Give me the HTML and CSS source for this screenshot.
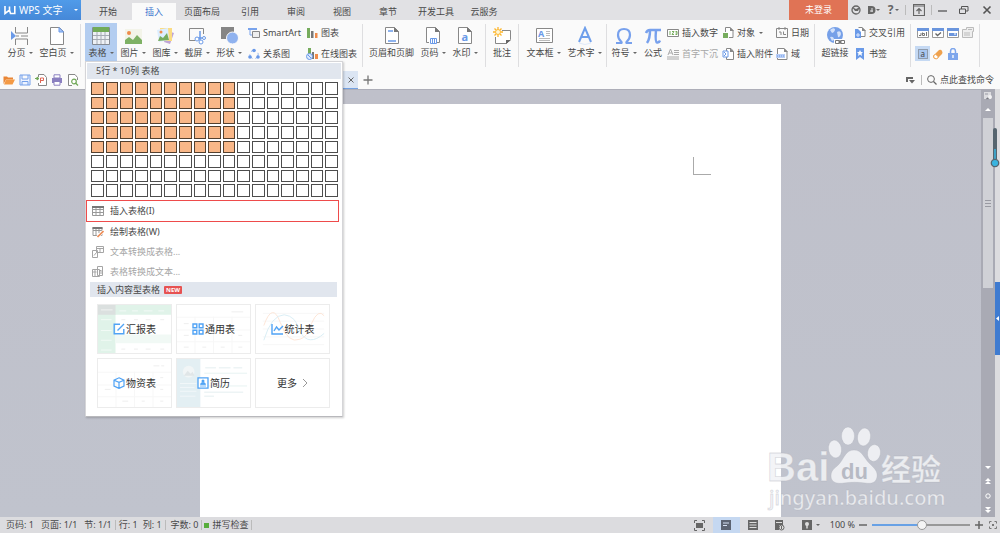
FILE: index.html
```html
<!DOCTYPE html>
<html lang="zh-CN">
<head>
<meta charset="utf-8">
<title>WPS 文字</title>
<link rel="stylesheet" href="styles.css">
</head>
<body>
<div class="app">
  <header class="titlebar">
    <button class="brand"><svg width="12" height="10" viewBox="0 0 12 10"><path d="M1 1v7.500L5.500 5l1 3.500h4.300V1M5.500 1.500V5" fill="none" stroke="#fff" stroke-width="1.600"/></svg><span>WPS 文字</span><i class="caret white"></i></button>
    <nav class="tabs">
      <button>开始</button><button class="active">插入</button><button>页面布局</button><button>引用</button><button>审阅</button><button>视图</button><button>章节</button><button>开发工具</button><button>云服务</button>
    </nav>
    <button class="login">未登录</button>
    <div class="wintools">
      <button class="w16" aria-label="皮肤"><svg width="10" height="10" viewBox="0 0 10 10"><circle cx="5" cy="5" r="4" fill="none" stroke="#666" stroke-width="1.300"/><path d="M1 2l4 2 4-2-2 4H4z" fill="#666"/></svg></button>
      <button class="w18" aria-label="文档"><svg width="9" height="10" viewBox="0 0 9 10"><path d="M1 1h3.500a4 4 0 010 8H1z" fill="#666"/><path d="M3 6h3M5 3v4" stroke="#e1e1e4"/></svg><i class="caret"></i></button>
      <button class="w23 help">?<i class="caret"></i></button>
      <span class="vline"></span>
      <button class="w25" aria-label="收起功能区"><svg width="12" height="12" viewBox="0 0 12 12"><path d="M.5.500h11v11H.5zM.5 2h11M6 10V5M3.500 7L6 4.500 8.500 7" fill="none" stroke="#666" stroke-width="1.200"/></svg></button>
      <span class="vline"></span>
      <button class="w21" aria-label="最小化"><svg width="10" height="10" viewBox="0 0 10 10"><path d="M0 6h9" stroke="#555" stroke-width="1.300"/></svg></button>
      <button class="w21" aria-label="还原"><svg width="10" height="10" viewBox="0 0 10 10"><path d="M.5 4h6v4.500h-6zM2.500 4V1.500h6.500V6H6.500" fill="none" stroke="#555"/></svg></button>
      <button class="w26" aria-label="关闭"><svg width="10" height="10" viewBox="0 0 10 10"><path d="M1.500 1.500l7 7M8.500 1.500l-7 7" stroke="#555" stroke-width="1.600"/></svg></button>
    </div>
  </header>

  <div class="ribbon">
    <div class="group g1">
      <button class="big w32"><svg width="20" height="20" viewBox="0 0 20 20"><path d="M5.500 1v6h12V1M5.500 19v-6h12v6" fill="none" stroke="#888"/><path d="M1 5l5 5-5 4z" fill="#6a9ae8"/><path d="M6 10h3M11 10h7" stroke="#888"/></svg><span>分页<i class="caret"></i></span></button>
      <button class="big w41"><svg width="20" height="20" viewBox="0 0 20 20"><path d="M3.500 1.500h9l4 4v13h-13z" fill="#fff" stroke="#888"/><path d="M12 1.500V6h4.500z" fill="#a8c5fa" stroke="#6a9ae8"/></svg><span>空白页<i class="caret"></i></span></button>
    </div>
    <div class="group g2">
      <div class="picker">
        <button class="big w32 open"><svg width="20" height="20" viewBox="0 0 20 20"><path d="M1.500 1.500h17v17h-17z" fill="#eef1f5" stroke="#858b94"/><path d="M2 1h16v5H2z" fill="#72ab58"/><path d="M2 9.500h16M2 13.500h16M6 6v12M10 6v12M14 6v12" stroke="#a5abb5"/></svg><span>表格<i class="caret"></i></span></button>
        <div class="menu">
          <div class="sizehead">5行 * 10列 表格</div>
          <div class="cells" id="cells"></div>
          <button class="item marked"><svg width="12" height="12" viewBox="0 0 12 12"><path d="M.5 1.500h11v9H.5zM.5 4.500h11M.5 7.500h11M4 2v9M8 2v9" fill="none" stroke="#999"/><path d="M0 1h12v2H0z" fill="#777"/></svg>插入表格(I)</button>
          <button class="item"><svg width="12" height="12" viewBox="0 0 12 12"><path d="M1 1.500h9v8H1zM1 4.500h9M4 2v8M7 2v5" fill="none" stroke="#999"/><path d="M.5 1h10v2H.5z" fill="#777"/><path d="M5.500 11L11.500 5" stroke="#fff" stroke-width="3"/><path d="M5.500 11L11.500 5" stroke="#ee8c56" stroke-width="1.700"/></svg>绘制表格(W)</button>
          <button class="item" disabled><svg width="12" height="12" viewBox="0 0 12 12"><path d="M4.500.500h7v6h-7zM4.500 2.500h7M8 2.500v4M.5 4.500h5v7h-5zM2 9.500l2.500-3" fill="none" stroke="#a5a5a5"/></svg>文本转换成表格...</button>
          <button class="item" disabled><svg width="12" height="12" viewBox="0 0 12 12"><path d="M5.500.500h5v9h-5zM.5 3.500h7v7h-7zM3 4v6M.5 6h4M7 6l2-2v4" fill="none" stroke="#a5a5a5"/></svg>表格转换成文本...</button>
          <div class="typehead">插入内容型表格<b>NEW</b></div>
          <div class="cards">
            <button class="card">
              <svg class="art" viewBox="0 0 75 49" preserveAspectRatio="none"><path d="M0 0h75v10H0zM0 0h18v49H0z" fill="#e0f3e9"/><path d="M0 0h18v10H0z" fill="#dbe0df"/><path d="M18 30h57v9H18z" fill="#f1f9f5"/><path d="M3 5h12M22 6h7M35 6h6M47 6h9M62 6h6M3 15h11M3 26h11M3 36h11M3 46h11" stroke="#fff" stroke-opacity=".6"/><path d="M24 15h4M37 15h4M49 15h5M64 15h4M24 45h4M37 45h4M49 45h5M64 45h4" stroke="#eee"/></svg>
              <svg width="12" height="12" viewBox="0 0 12 12"><path d="M7 1.200H1.200v9.600h9.600V6M4.500 7.500L11 1" fill="none" stroke="#50a3f5" stroke-width="1.400"/></svg><span>汇报表</span></button>
            <button class="card">
              <svg class="art" viewBox="0 0 75 49" preserveAspectRatio="none"><path d="M0 12.500h75M0 25.500h75M0 37.500h75M18.500 12v37M37.500 12v37M56.500 12v37" stroke="#f7f7f7"/><path d="M56 7h12M7 19h5M7 31h5M7 43h5M26 43h4M45 43h4M63 43h4M63 31h4" stroke="#eee"/></svg>
              <svg width="12" height="12" viewBox="0 0 12 12"><path d="M1 1h3.800v3.800H1zM7.200 1H11v3.800H7.200zM1 7.200h3.800V11H1zM7.200 7.200H11V11H7.200z" fill="none" stroke="#50a3f5" stroke-width="1.400"/></svg><span>通用表</span></button>
            <button class="card">
              <svg class="art" viewBox="0 0 75 49" preserveAspectRatio="none"><path d="M7 8.500h63M7 16.500h63M7 24.500h63M7 32.500h63M7 40.500h63" stroke="#f7f7f7"/><path d="M8 21Q17-4 25 18T45 35Q53 33 57 19 64 3 70 11" fill="none" stroke="#fde5d7"/><path d="M8 36Q16 10 29 10 41 11 45 27 54 43 70 29" fill="none" stroke="#d9eef5"/></svg>
              <svg width="13" height="12" viewBox="0 0 13 12"><path d="M1 1v10h11M3 8l2.500-4 2.500 3L12 3" fill="none" stroke="#50a3f5" stroke-width="1.400"/></svg><span>统计表</span></button>
            <button class="card">
              <svg class="art" viewBox="0 0 75 49" preserveAspectRatio="none"><path d="M0 13.500h75M0 26.500h75M0 38.500h75M18.500 13v36M37.500 13v36M56.500 13v36" stroke="#f7f7f7"/><path d="M57 7h6M65 7h3M7 31h6M25 43h6M45 43h3M64 43h3M64 31h3M64 19h3" stroke="#eee"/></svg>
              <svg width="12" height="12" viewBox="0 0 12 12"><path d="M6 .8l5 2.300v6L6 11.400l-5-2.300v-6zM1 3.200l5 2.200 5-2.200M6 5.400v6" fill="none" stroke="#50a3f5" stroke-width="1.200"/></svg><span>物资表</span></button>
            <button class="card">
              <svg class="art" viewBox="0 0 75 49" preserveAspectRatio="none"><path d="M0 0h24v49H0z" fill="#e3eff3"/><circle cx="12" cy="13" r="6" fill="#f1f5f6"/><path d="M7 17l4-5 3 3 2-2 2 4z" fill="#e0e6e8"/><path d="M3 25h17M3 29h15M3 33h17M3 38h16" stroke="#f2f7f9"/><path d="M28 14.500h44M28 27.500h44" stroke="#e6f3f2"/><path d="M29 9h11M43 9h12M58 9h9M28 34h40M28 38h10" stroke="#edf4f5" stroke-width="1.500"/></svg>
              <svg width="12" height="12" viewBox="0 0 12 12"><path d="M1 .8h10v10.400H1z" fill="#fff" stroke="#50a3f5" stroke-width="1.300"/><circle cx="6" cy="4" r="1.500" fill="#50a3f5"/><path d="M3.500 7.500q0-2 2.500-2t2.500 2zM3 9h6" fill="#50a3f5" stroke="#50a3f5" stroke-width=".8"/></svg><span>简历</span></button>
            <button class="card"><span>更多</span><svg width="6" height="10" viewBox="0 0 6 10"><path d="M1 1l4 4-4 4" fill="none" stroke="#999"/></svg></button>
          </div>
        </div>
      </div>
      <button class="big w32"><svg width="20" height="20" viewBox="0 0 20 20"><path d="M2 3h17v15H2z" fill="#f3f4e9"/><circle cx="6" cy="7" r="2" fill="#ef8b4b"/><path d="M2 18v-4l4-3 4 3 4-5 5 5v4z" fill="#7eb165"/></svg><span>图片<i class="caret"></i></span></button>
      <button class="big w32"><svg width="20" height="20" viewBox="0 0 20 20"><path d="M13 5l6 2-4 11-6-2z" fill="#bfa5d7"/><path d="M5 2h12v13H6z" fill="#fbdc83"/><path d="M2 4l11-2 1 12-10 2z" fill="#dceeff"/><path d="M3 15l2-5 3 2 4-5 2 7z" fill="#76ac5d"/><circle cx="6" cy="6" r="1.500" fill="#ef8b4b"/></svg><span>图库<i class="caret"></i></span></button>
      <button class="big w32"><svg width="20" height="20" viewBox="0 0 20 20"><path d="M8 14.500H2.500v-12h14V8" fill="none" stroke="#888"/><path d="M13 5v9M17 12H9" stroke="#6a9ae8" stroke-width="1.500"/><circle cx="10" cy="13" r="2" fill="#fff" stroke="#6a9ae8"/><circle cx="14" cy="16" r="2" fill="#fff" stroke="#6a9ae8"/><circle cx="17" cy="12" r="1.500" fill="#fff" stroke="#6a9ae8"/></svg><span>截屏<i class="caret"></i></span></button>
      <button class="big w32"><svg width="20" height="20" viewBox="0 0 20 20"><path d="M2 1h13v12H2z" fill="#858585"/><circle cx="13.500" cy="12" r="6" fill="#8fb2ef" stroke="#fafafa"/></svg><span>形状<i class="caret"></i></span></button>
      <div class="col c1">
        <button class="small"><svg width="12" height="12" viewBox="0 0 12 12"><path d="M0 1h9v2H0z" fill="#79a3ec"/><path d="M2 3v5h2" fill="none" stroke="#79a3ec"/><path d="M4.500 4.500h7v6h-7z" fill="#eee" stroke="#888"/></svg>SmartArt</button>
        <button class="small"><svg width="12" height="12" viewBox="0 0 12 12"><circle cx="6" cy="6.500" r="4.200" fill="none" stroke="#91b3ee" stroke-dasharray="5 3"/><circle cx="6" cy="2.500" r="1.800" fill="#6898e8"/><circle cx="2" cy="9" r="1.800" fill="#6898e8"/><circle cx="10" cy="9" r="1.800" fill="#6898e8"/></svg>关系图</button>
      </div>
      <div class="col c2">
        <button class="small"><svg width="12" height="12" viewBox="0 0 12 12"><path d="M1 1h3v10H1z" fill="#76ac5d"/><path d="M5 4h2.500v7H5z" fill="#777"/><path d="M9 6h2.500v5H9z" fill="#ef8b4b"/></svg>图表</button>
        <button class="small"><svg width="12" height="12" viewBox="0 0 12 12"><path d="M2 0h3v9H2z" fill="#76ac5d"/><path d="M6 4h2v7H6z" fill="#777"/><path d="M9 6h3v5H9z" fill="#ef8b4b"/><circle cx="3.500" cy="8.500" r="3" fill="#dce9ff" stroke="#6898e8"/><path d="M2 7l3 3" stroke="#6898e8"/></svg>在线图表</button>
      </div>
    </div>
    <div class="group g3">
      <button class="big w51"><svg width="20" height="20" viewBox="0 0 20 20"><path d="M3.500 1.500h9l4 4v12h-13z" fill="#fff" stroke="#888"/><path d="M12 1v5h5z" fill="#777"/><path d="M6 5h5M6 15h8" stroke="#6a9ae8" stroke-width="1.500"/></svg><span>页眉和页脚</span></button>
      <button class="big w32"><svg width="20" height="20" viewBox="0 0 20 20"><path d="M6 16.500H3.500v-15h9l4 4v11H14" fill="#fff" stroke="#888"/><path d="M12 1v5h5z" fill="#777"/><path d="M7.500 12.500h6v5h-6zM9.500 12v6M11.500 12v6" fill="none" stroke="#6a9ae8"/></svg><span>页码<i class="caret"></i></span></button>
      <button class="big w32"><svg width="20" height="20" viewBox="0 0 20 20"><path d="M3.500 1.500h9l4 4v12h-13z" fill="#fff" stroke="#888"/><path d="M12 1v5h5z" fill="#777"/><text x="6.500" y="15" class="wm-a">a</text></svg><span>水印<i class="caret"></i></span></button>
    </div>
    <div class="group g4">
      <button class="big w32"><svg width="20" height="20" viewBox="0 0 20 20"><path d="M10 4.500h8.500v9l-4 4h-11V11" fill="#fff" stroke="#888"/><path d="M14 18v-4h5z" fill="#666"/><circle cx="6" cy="6" r="2.500" fill="#fff6d8" stroke="#fdb62d"/><path d="M6 1v2M6 9v2M1 6h2M9 6h2M2.500 2.500L4 4M8 8l1.500 1.500M9.500 2.500L8 4M4 8L2.500 9.500" stroke="#fdb62d" stroke-width="1.300"/></svg><span>批注</span></button>
    </div>
    <div class="group g5">
      <button class="big w41"><svg width="20" height="20" viewBox="0 0 20 20"><path d="M2.500 2.500h16v14h-16z" fill="#fff" stroke="#888"/><text x="4" y="11" class="box-a">A</text><path d="M12 5.500h4M12 7.500h4M12 9.500h4M5 12.500h11M5 14.500h11" stroke="#bbb"/></svg><span>文本框<i class="caret"></i></span></button>
      <button class="big w41"><svg width="20" height="20" viewBox="0 0 20 20"><path d="M4 16L10 2l6 14M6.500 11h7" fill="none" stroke="#6f9feb" stroke-width="2"/><path d="M4 17q6 3 12 0" fill="none" stroke="#e0eafb"/></svg><span>艺术字<i class="caret"></i></span></button>
    </div>
    <div class="group g6">
      <button class="big w32"><svg width="20" height="20" viewBox="0 0 20 20"><path d="M2 17h5q1 0 .5-1Q4 13 4 9q0-6 6-6t6 6q0 4-3.500 7-.5 1 .5 1h5" fill="none" stroke="#78a1ed" stroke-width="2.200"/></svg><span>符号<i class="caret"></i></span></button>
      <button class="big w26"><svg width="20" height="20" viewBox="0 0 20 20"><path d="M3 7q1-3 4-3h11M7 4q0 9-3 13M13 4q-1 12 1 12.500 2 .5 3-2" fill="none" stroke="#78a1ed" stroke-width="2.500"/></svg><span>公式</span></button>
      <div class="col c3">
        <button class="small"><svg width="12" height="12" viewBox="0 0 12 12"><path d="M.5 2.500h11v7H.5z" fill="#fff" stroke="#888"/><path d="M3 4v4M5 4.500h2L5 7.500h2M8.500 4.500H10v3H8.500M8.500 6H10" fill="none" stroke="#76ac5d"/></svg>插入数字</button>
        <button class="small" disabled><svg width="12" height="12" viewBox="0 0 12 12"><path d="M1 7l2.500-6L6 7M2 5h3M7 2.500h5M7 4.500h5M7 6.500h5M0 9h12M0 11h12" fill="none" stroke="#aaa"/></svg>首字下沉</button>
      </div>
      <div class="col c4">
        <button class="small"><svg width="12" height="12" viewBox="0 0 12 12"><path d="M3.500 5V.5H8l3 3v7H7" fill="#fff" stroke="#888"/><path d="M8 0v4h4z" fill="#888"/><path d="M1 6h5v5H1z" fill="#76ac5d"/></svg>对象<i class="caret"></i></button>
        <button class="small"><svg width="12" height="12" viewBox="0 0 12 12"><path d="M4.500 3V.5H9l2.500 3v8h-7V9" fill="#fff" stroke="#888"/><path d="M8 0v4h4z" fill="#888"/><path d="M1 3h5v6H1z" fill="#fff" stroke="#6a9ae8"/><path d="M2 4l2 2-2 2" fill="none" stroke="#6a9ae8"/></svg>插入附件</button>
      </div>
      <div class="col c5">
        <button class="small"><svg width="12" height="12" viewBox="0 0 12 12"><path d="M.5 1.500h11v9H.5zM3 0v3M9 0v3M3 5h2v3M7.500 4.500v3H10" fill="none" stroke="#888"/></svg>日期</button>
        <button class="small"><svg width="12" height="12" viewBox="0 0 12 12"><path d="M1.500.500H8l3 3v8H1.500z" fill="#fff" stroke="#888"/><path d="M8 0v4h4z" fill="#888"/><path d="M0 6h9v4H0z" fill="#b8cef6"/><path d="M1 8h7" stroke="#6a9ae8" stroke-dasharray="1 1"/></svg>域</button>
      </div>
    </div>
    <div class="group g7">
      <button class="big w34"><svg width="20" height="20" viewBox="0 0 20 20"><circle cx="10" cy="9" r="8" fill="#76a0e8"/><path d="M5 4q3-3 5-1 0 3-3 4zM12 6q4-2 4 2-1 4-3 3zM5 11q4-1 4 3l-2 1z" fill="#d3e1fa"/><path d="M10.500 14.500h4v3h-4zM15.500 14.500h4v3h-4zM13 16h4" fill="none" stroke="#fff" stroke-width="3"/><path d="M10.500 14.500h4v3h-4zM15.500 14.500h4v3h-4zM13 16h4" fill="none" stroke="#777"/></svg><span>超链接</span></button>
      <div class="col c6">
        <button class="small"><svg width="12" height="12" viewBox="0 0 12 12"><path d="M4.500.500H8l3 3v6H5" fill="#fff" stroke="#888"/><path d="M8 0v4h4z" fill="#888"/><path d="M1 2h3l3 3v6H1z" fill="#6a9ae8"/><path d="M2 8h4M4 6v4" stroke="#dce8ff"/></svg>交叉引用</button>
        <button class="small"><svg width="12" height="12" viewBox="0 0 12 12"><path d="M2 0h8v12L6 9l-4 3z" fill="#6a9ae8"/><path d="M6 2l1 2h2L7.500 5.500 8 8 6 6.500 4 8l.5-2.500L3 4h2z" fill="#fff"/></svg>书签</button>
      </div>
    </div>
    <div class="group g8">
      <div class="forms">
        <button aria-label="文字型窗体域"><svg width="12" height="12" viewBox="0 0 12 12"><path d="M.5 1.500h11v9H.5z" fill="#fff" stroke="#999"/><path d="M0 1h12v3H0z" fill="#6a95dd"/><path d="M2 8.500h2V6M5.500 5.500v3H7.500v-2h-2M9.500 5v4" fill="none" stroke="#777"/></svg></button>
        <button aria-label="复选框型窗体域"><svg width="12" height="12" viewBox="0 0 12 12"><path d="M.5 1.500h11v9H.5z" fill="#fff" stroke="#999"/><path d="M0 1h12v3H0z" fill="#6a95dd"/><path d="M3.500 6.500L5.500 8.500l3.500-3" fill="none" stroke="#666" stroke-width="1.300"/></svg></button>
        <button aria-label="下拉型窗体域"><svg width="12" height="12" viewBox="0 0 12 12"><path d="M.5 1.500h11v9H.5z" fill="#fff" stroke="#999"/><path d="M0 1h12v3H0z" fill="#6a95dd"/><path d="M2 6h8v3H2z" fill="#6a95dd"/><path d="M7 7h2" stroke="#fff"/></svg></button>
        <button aria-label="窗体域选项" disabled><svg width="12" height="12" viewBox="0 0 12 12"><path d="M.5 2.500h4v-2h7v4h-1v6H.5zM6 2.500h4M2 6h6M2 8h6" fill="#eee" stroke="#bbb"/></svg></button>
        <button class="on" aria-label="窗体域底纹"><svg width="12" height="12" viewBox="0 0 12 12"><path d="M1.500 1.500h9v9h-9z" fill="#a9c6ef" stroke="#666" stroke-dasharray="1 1"/><text x="3.500" y="9" class="fld">a</text></svg></button>
        <button aria-label="重置窗体域"><svg width="12" height="12" viewBox="0 0 12 12"><path d="M1 8l6-6q2-1 3 1t0 3l-5 5q-4 0-4-3z" fill="#efa14d"/><path d="M1.500 8l2-2 3 3-2 2q-3 0-3-3z" fill="#fff" stroke="#efa14d"/></svg></button>
        <button aria-label="保护窗体"><svg width="12" height="12" viewBox="0 0 12 12"><path d="M3.500 6V3.500q0-3 2.500-3t2.500 3V6" fill="none" stroke="#7ea6ec" stroke-width="1.500"/><path d="M1 5h10v7H1z" fill="#7ea6ec"/><path d="M6 7v3" stroke="#fff" stroke-width="1.300"/></svg></button>
      </div>
    </div>
  </div>

  <div class="docbar">
    <div class="quick">
      <button aria-label="打开"><svg width="12" height="12" viewBox="0 0 12 12"><path d="M.5 10V2.500H4l1 1h5v2H3z" fill="#e98535"/><path d="M1 10.500L3 5.500h9l-2.500 5z" fill="#f49a45"/></svg></button>
      <button aria-label="保存"><svg width="12" height="12" viewBox="0 0 12 12"><path d="M1 1h10v10H1zM3 1v4h6V1M3 11V7.500h6V11" fill="#edf3ff" stroke="#74a0ea"/></svg></button>
      <button aria-label="输出为PDF"><svg width="12" height="12" viewBox="0 0 12 12"><path d="M3.500 3V.5H9l2.500 3v8h-8V9" fill="#fff" stroke="#888"/><path d="M5.500 9V4h3v2.500h-3" fill="none" stroke="#df6655"/><path d="M0 4.500h3M2 3l2 1.500L2 6z" stroke="#70a857" fill="#70a857"/></svg></button>
      <button aria-label="打印"><svg width="12" height="12" viewBox="0 0 12 12"><path d="M1 4h10v5H1z" fill="#8b80c0"/><path d="M3 .8h6V4H3zM3 7.500h6v3.700H3z" fill="#fff" stroke="#8b80c0"/></svg></button>
      <button aria-label="打印预览"><svg width="12" height="12" viewBox="0 0 12 12"><path d="M5 11.500H1.500V.5H8l2.500 3V6" fill="#fff" stroke="#888"/><circle cx="7" cy="7.500" r="2.300" fill="#fff" stroke="#70a857" stroke-width="1.200"/><path d="M8.500 9l2.500 2.500" stroke="#70a857" stroke-width="1.300"/></svg></button>
    </div>
    <div class="doctab"><button aria-label="关闭文档"><svg width="6" height="6" viewBox="0 0 6 6"><path d="M.5.500l5 5M5.500.500l-5 5" stroke="#666"/></svg></button></div>
    <button class="newtab" aria-label="新建标签"><svg width="10" height="10" viewBox="0 0 10 10"><path d="M5 .5v9M.5 5h9" stroke="#777" stroke-width="1.300"/></svg></button>
    <div class="find">
      <button aria-label="更多命令"><svg width="10" height="9" viewBox="0 0 10 9"><path d="M0 1h7v2H2v3H0z" fill="#666"/><path d="M3 4h6L6 7.500z" fill="#666"/></svg></button>
      <span class="vline"></span>
      <button class="search"><svg width="10" height="10" viewBox="0 0 10 10"><circle cx="4" cy="4" r="3.400" fill="none" stroke="#666"/><path d="M6.500 6.500l3 3" stroke="#666" stroke-width="1.200"/></svg>点此查找命令</button>
    </div>
  </div>

  <main class="work">
    <div class="canvas"><div class="page"><div class="corner"></div></div>
      <div class="watermark">
        <svg width="182" height="90" viewBox="0 0 182 90">
          <g class="wm-fill"><text x="1" y="55" class="wm-latin">Bai</text><text x="115" y="54" class="wm-cjk">经验</text>
          <ellipse cx="82" cy="10" rx="6.500" ry="9"/><ellipse cx="98" cy="11" rx="6.500" ry="9" transform="rotate(10 98 11)"/><ellipse cx="69" cy="23" rx="6.500" ry="9" transform="rotate(-10 69 23)"/><ellipse cx="108" cy="27" rx="6.500" ry="8.500" transform="rotate(10 108 27)"/>
          <path d="M88 24c8 0 10 8 15 13s9 8 8 14-6 7-12 6c-6-1-15-1-21 0s-13 0-13-7c0-7 5-8 9-13s6-13 14-13z"/></g>
          <text x="75" y="53" class="wm-du">du</text>
          <text x="3" y="79" class="wm-fill wm-url">jingyan.baidu.com</text>
        </svg>
      </div>
    </div>
    <div class="scroll">
      <svg width="8" height="8" viewBox="0 0 8 8"><path d="M0 0h7v7H0z" fill="#dcdce0"/><path d="M1 2h3M5 5v2H2z" stroke="#999aa4"/><circle cx="6" cy="5" r="2" fill="#f2f2f4"/></svg>
      <svg class="up" width="8" height="8" viewBox="0 0 8 8"><path d="M1 6l3-3 3 3z" fill="#fff"/></svg>
      <div class="track"><div class="thumb"><i></i><i></i><i></i></div></div>
      <svg width="8" height="8" viewBox="0 0 8 8"><path d="M1 2h6L4 5z" fill="#fff"/></svg>
      <svg width="8" height="8" viewBox="0 0 8 8"><path d="M4 0l3 3H1zM4 3l3 3H1z" fill="#fff"/></svg>
      <svg width="8" height="8" viewBox="0 0 8 8"><circle cx="4" cy="4" r="2.200" fill="none" stroke="#fff"/></svg>
      <svg width="8" height="8" viewBox="0 0 8 8"><path d="M4 4L1 1h6zM4 7L1 4h6z" fill="#fff"/></svg>
    </div>
    <div class="side">
      <button class="pull" aria-label="展开任务窗格"><svg width="4" height="5" viewBox="0 0 4 5"><path d="M3 0v5L0 2.500z" fill="#fff"/></svg></button>
      <svg class="gauge" width="10" height="42" viewBox="0 0 10 42"><path d="M3 3q0-2 2-2t2 2v29H3z" fill="#56656f"/><path d="M5 22v14" stroke="#39b4e0" stroke-width="1.500"/><circle cx="5" cy="36" r="3.700" fill="#39b4e0" stroke="#56656f" stroke-width="1.300"/></svg>
    </div>
  </main>

  <footer class="status">
    <span class="s1">页码: 1</span><span class="s1">页面: 1/1</span><span class="s2">节: 1/1</span><span class="vline"></span><span class="s3">行: 1</span><span class="s2">列: 1</span><span class="vline"></span><span class="s4">字数: 0</span><span class="vline"></span><i class="dot"></i><span class="s2">拼写检查</span><span class="vline"></span>
    <div class="views">
      <button aria-label="全屏显示"><svg width="11" height="11" viewBox="0 0 11 11"><path d="M2 3h7v5H2z" fill="#666"/><path d="M.5 3V.5H3M8 .5h2.500V3M10.500 8v2.500H8M3 10.500H.5V8" fill="none" stroke="#666"/></svg></button>
      <button class="on" aria-label="页面视图"><svg width="10" height="10" viewBox="0 0 10 10"><path d="M0 0h10v10H0z" fill="#5c6472"/><path d="M2 3h6M2 5.500h4" stroke="#d5e1f4"/></svg></button>
      <button aria-label="大纲"><svg width="10" height="10" viewBox="0 0 10 10"><path d="M0 0h10v10H0z" fill="#666"/><path d="M1.500 2.500h7M1.500 5h7M1.500 7.500h7" stroke="#ddd"/></svg></button>
      <button aria-label="Web版式"><svg width="10" height="11" viewBox="0 0 10 11"><path d="M0 0h8v5H4v5H0z" fill="#666"/><path d="M1 2.500h6" stroke="#ddd"/><circle cx="6.500" cy="7.500" r="2.500" fill="#ddd" stroke="#666"/><path d="M6.500 6v3" stroke="#666"/></svg></button>
      <button aria-label="护眼模式"><svg width="10" height="10" viewBox="0 0 10 10"><path d="M0 0h10v10H0z" fill="#666"/><circle cx="5" cy="4" r="2" fill="#ddd"/><path d="M5 5v3.500" stroke="#ddd" stroke-width="1.500"/></svg></button>
    </div>
    <i class="caret"></i>
    <label class="pct" for="zoom">100 %</label>
    <button class="step" aria-label="缩小"><svg width="8" height="8" viewBox="0 0 8 8"><path d="M0 4h8" stroke="#666" stroke-width="1.500"/></svg></button>
    <input type="range" id="zoom" min="0" max="200" value="102">
    <button class="step" aria-label="放大"><svg width="8" height="8" viewBox="0 0 8 8"><path d="M0 4h8M4 0v8" stroke="#666" stroke-width="1.500"/></svg></button>
    <button class="full" aria-label="最佳比例"><svg width="8" height="8" viewBox="0 0 8 8"><path d="M.5 2.500v-2h2M5.500.5h2v2M7.500 5.500v2h-2M2.500 7.500h-2v-2" fill="none" stroke="#777"/><path d="M3 3h2v2H3z" fill="#777"/></svg></button>
  </footer>
</div>
<script src="script.js"></script>
</body>
</html>
```

FILE: styles.css
```css
* { box-sizing: border-box; }
body {
  margin: 0;
  font: 9px/12px "Noto Sans", "Noto Sans CJK SC", sans-serif;
  color: #484848;
}
button {
  display: flex;
  align-items: center;
  justify-content: center;
  padding: 0;
  border: 0;
  background: none;
  font: inherit;
  color: inherit;
  white-space: nowrap;
}
button:disabled { color: #a6a6a6; }
svg { display: block; flex: none; }
.app { display: flex; flex-direction: column; height: 100vh; overflow: hidden; background: #fafafa; }
.caret {
  width: 0;
  height: 0;
  flex: none;
  border: 2px solid transparent;
  border-top-color: #666;
  border-bottom: 0;
}
.caret.white { margin-left: auto; border-top-color: #fff; }
.vline { width: 1px; height: 10px; background: #bbb; flex: none; }

.titlebar { display: flex; height: 20px; flex: none; background: #e1e1e4; }
.brand {
  width: 81px;
  padding: 0 3px 0 4px;
  gap: 3px;
  justify-content: flex-start;
  background: linear-gradient(#509be9, #4688d8);
  color: #fff;
  font-size: 10px;
}
.tabs { display: flex; padding: 3px 0 0 4px; }
.tabs button { min-width: 46px; padding: 0 7px; }
.tabs .active { min-width: 44px; margin: 0 1px; background: #fafafa; color: #3f78cf; }
.login { width: 59px; margin-left: auto; background: #e07355; color: #fff; }
.wintools { display: flex; align-items: center; }
.w16 { width: 16px; }
.w18 { width: 18px; }
.w21 { width: 21px; }
.w23 { width: 23px; }
.w25 { width: 25px; }
.help { font-size: 12px; font-weight: bold; gap: 2px; color: #666; }

.ribbon { display: flex; height: 51px; flex: none; padding-top: 2px; }
.group { position: relative; display: flex; align-items: flex-start; flex: none; }
.group::after { content: ""; width: 1px; height: 43px; margin-top: 2px; background: #dedee0; }
.big {
  flex-direction: column;
  justify-content: flex-start;
  gap: 1px;
  height: 38px;
  margin-top: 1px;
  padding-top: 3px;
}
.big span { display: flex; align-items: center; gap: 3px; }
.w26 { width: 26px; }
.w32 { width: 32px; }
.w34 { width: 34px; }
.w41 { width: 41px; }
.w51 { width: 51px; }
.open { background: #b3cdf0; }
.small { height: 21px; gap: 3px; }
.small .caret { margin-left: 1px; }
.col { display: flex; flex-direction: column; align-items: flex-start; }
.g1 { padding-left: 4px; }
.g1::after { margin-left: 3px; }
.g2 { padding-left: 4px; }
.g2::after { margin-left: 5px; }
.g3 { padding-left: 3px; }
.g3::after { margin-left: 4px; }
.g5 { padding-left: 4px; }
.g5::after { margin-left: 1px; }
.g6 { padding-left: 1px; }
.g6::after { margin-left: 5px; }
.g7 { padding-left: 3px; }
.g7::after { margin-left: 5px; }
.g8 { padding-left: 4px; }
.g8::after { margin-left: 4px; }
.c1 { width: 55px; margin-left: 3px; }
.c2 { width: 51px; margin-left: 3px; }
.c3 { width: 51px; margin-left: 1px; }
.c4 { width: 50px; margin-left: 4px; }
.c5 { width: 33px; margin-left: 4px; }
.c6 { width: 51px; margin-left: 2px; }
.forms { display: grid; grid-template-columns: repeat(4, 15px); grid-auto-rows: 21px; align-items: center; }
.forms button { height: 15px; }
.forms .on { background: #c5d9f3; }
.wm-a { font: bold 11px "Noto Sans", sans-serif; fill: #6a9ae8; }
.box-a { font: bold 9px "Noto Sans", sans-serif; fill: #6a9ae8; }
.fld { font: 8px "Noto Sans", sans-serif; fill: #444; }

.picker { position: relative; }
.menu {
  position: absolute;
  z-index: 5;
  top: 39px;
  left: 0;
  width: 258px;
  padding: 1px 1px 8px;
  border: 1px solid #d5d5d8;
  border-bottom-color: #b8b8bc;
  background: #fff;
  box-shadow: 1px 1px 2px rgba(0, 0, 0, .2);
}
.sizehead { height: 16px; padding: 2px 9px; background: #e1e6ee; }
.cells {
  display: grid;
  grid-template: repeat(8, 1fr) / repeat(17, 1fr);
  gap: 2px;
  height: 115px;
  margin: 3px 3px 3px 4px;
}
.cell { border: 1px solid #4d4d4d; background: #fff; }
.cell.picked { background: #f9b788; border-color: #54402f; }
.item { width: 100%; height: 20px; padding-left: 5px; gap: 6px; justify-content: flex-start; }
.item.marked { width: 253px; height: 22px; margin-left: -1px; border: 1px solid #ee4b4b; }
.typehead {
  display: flex;
  align-items: center;
  gap: 4px;
  height: 15px;
  margin: 0 4px 7px 3px;
  padding-left: 7px;
  background: #e1e6ee;
}
.typehead b { height: 8px; padding: 0 2px; border-radius: 1px; background: #e65252; color: #fff; font: bold 6px/8px "Noto Sans", sans-serif; }
.cards { display: grid; grid-template-columns: repeat(3, 1fr); grid-auto-rows: 50px; gap: 4px; margin: 0 11px 0 10px; }
.card { position: relative; gap: 1px; border: 1px solid #ececec; font-size: 10px; color: #333; }
.card > :not(.art) { position: relative; }
.card .art { position: absolute; inset: 0; width: 100%; height: 100%; }
.card:last-child { gap: 5px; }

.docbar { display: flex; align-items: center; height: 18px; flex: none; }
.quick { display: flex; gap: 4px; padding-left: 3px; }
.doctab {
  display: flex;
  align-items: center;
  justify-content: flex-end;
  align-self: stretch;
  width: 258px;
  margin-left: 21px;
  padding-right: 4px;
  background: #dbe5f3;
  border-bottom: 1px solid #73a1e2;
}
.newtab { margin-left: 5px; }
.find { display: flex; align-items: center; gap: 5px; margin-left: auto; padding-right: 6px; }
.search { gap: 3px; }

.work { display: flex; flex: 1; min-height: 0; }
.canvas {
  position: relative;
  flex: 1;
  padding-top: 14px;
  border-top: 1px solid #adaeb8;
  background: linear-gradient(#bfc0ca, #c0c3cd);
}
.page { display: flex; justify-content: flex-end; align-items: flex-start; width: 59.25%; height: 100%; margin: 0 auto; padding: 53px 70px; background: #fff; }
.corner { width: 18px; height: 18px; border: solid #aaa; border-width: 0 0 1px 1px; }
.watermark { position: absolute; right: 33px; bottom: 1px; }
.wm-fill { fill: #f2f3f6; fill-opacity: .9; stroke: #adafb9; stroke-opacity: .4; stroke-width: .8; }
.wm-latin { font: bold 40px "Liberation Sans", sans-serif; }
.wm-cjk { font: bold 30px "Noto Sans CJK SC", sans-serif; }
.wm-url { font: 500 20px "Noto Sans", sans-serif; }
.wm-du { font: bold 22px "Liberation Sans", sans-serif; fill: #b7bac4; }
.scroll { display: flex; flex-direction: column; align-items: center; gap: 6px; width: 14px; padding: 3px 2px; background: #a9aab4; }
.up { margin: -1px 0; }
.track { flex: 1; align-self: stretch; }
.thumb { display: flex; flex-direction: column; align-items: center; justify-content: center; gap: 2px; height: 50%; background: #d0d1d6; }
.thumb i { width: 6px; height: 1px; background: #999aa2; }
.side { position: relative; display: flex; align-items: center; width: 5px; background: #dcdcdf; }
.pull { width: 5px; height: 73px; margin-top: 30px; background: #3f7bd0; }
.gauge { position: absolute; top: 38px; right: 0; }

.status { display: flex; align-items: center; height: 16px; flex: none; padding-left: 6px; background: #dcdcdf; }
.s1 { margin-right: 7px; }
.s2 { margin-right: 3px; }
.s3 { margin: 0 5px 0 3px; }
.s4 { margin: 0 3px 0 5px; }
.dot { width: 5px; height: 5px; margin: 0 3px 0 2px; background: #57ad3b; }
.views { display: flex; align-self: stretch; margin-left: auto; }
.views button { width: 27px; }
.views .on { background: #c5d8f1; }
.status > .caret { margin-left: -5px; }
.pct { margin: 0 4px 0 10px; }
.step { width: 8px; }
#zoom { width: 98px; height: 12px; margin: 0 5px; appearance: none; background: none; }
#zoom::-webkit-slider-runnable-track { height: 2px; background: linear-gradient(90deg, #68a1e5 50%, #999 50%); }
#zoom::-webkit-slider-thumb { appearance: none; width: 10px; height: 10px; margin-top: -4px; border: 1px solid #999; border-radius: 50%; background: #f5f5f5; }
.full { margin: 0 3px 0 6px; }
```

FILE: script.js
```js
// Table size picker: 8 rows by 17 columns, with the hovered range filled in.
const COLS = 17;
const grid = document.getElementById("cells");
const cells = [];

function pick(rows, cols) {
  cells.forEach((cell, i) => {
    cell.classList.toggle("picked", Math.floor(i / COLS) < rows && i % COLS < cols);
  });
}

for (let i = 0; i < 8 * COLS; i++) {
  const cell = document.createElement("div");
  cell.className = "cell";
  cell.addEventListener("mouseenter", () => pick(Math.floor(i / COLS) + 1, (i % COLS) + 1));
  grid.appendChild(cell);
  cells.push(cell);
}
pick(5, 10);
```
